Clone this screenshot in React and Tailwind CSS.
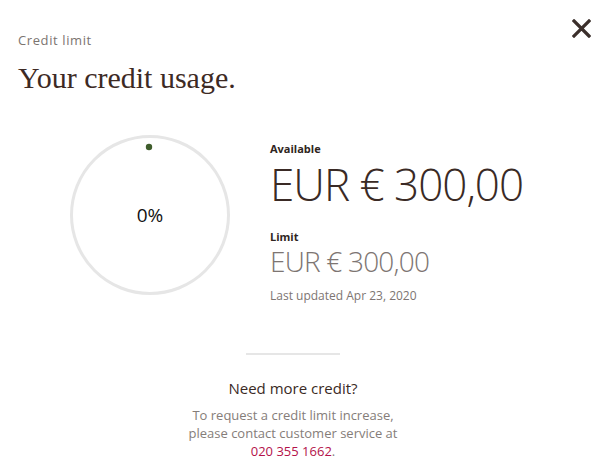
export default function App() {
  return (
    <div
      className="w-[603px] h-[466px] bg-white relative overflow-hidden"
      style={{ fontFamily: '"Open Sans", "Noto Sans", sans-serif' }}
    >
      {/* Close button */}
      <button className="absolute right-[12px] top-[18px] w-[20px] h-[20px] flex items-center justify-center text-[#3b2f2b]" aria-label="Close">
        <svg width="19" height="19" viewBox="0 0 19 19" fill="none">
          <path d="M2 2 L17 17 M17 2 L2 17" stroke="currentColor" strokeWidth="3.2" strokeLinecap="square" />
        </svg>
      </button>

      <div className="pt-[32px] px-[18px]">
        <div className="text-[13px] text-[#7b7470] tracking-[0.6px] leading-[16px]">Credit limit</div>
        <h1
          className="mt-[12px] text-[30px] leading-[36px] text-[#3d2a24]"
          style={{ fontFamily: '"Liberation Serif", "DejaVu Serif", serif' }}
        >
          Your credit usage.
        </h1>
      </div>

      <div className="flex flex-row items-start mt-[39px] pl-[70px]">
        {/* Usage ring */}
        <div className="relative w-[160px] h-[160px] shrink-0">
          <svg width="160" height="160" viewBox="0 0 160 160" className="absolute inset-0">
            <circle cx="80" cy="80" r="78.5" fill="none" stroke="#e6e6e6" strokeWidth="3" />
            <circle cx="79" cy="12" r="3.2" fill="#3f5d2c" />
          </svg>
          <div className="absolute inset-0 flex items-center justify-center text-[19px] text-[#111]">0%</div>
        </div>

        {/* Amounts */}
        <div className="ml-[40px] pt-[7px] flex flex-col">
          <div className="text-[11px] font-bold text-[#2f2521] leading-[14px]">Available</div>
          <div className="mt-[2px] text-[44px] font-light leading-[52px] text-[#3a2a25] tracking-[-1px]">EUR € 300,00</div>
          <div className="mt-[20px] text-[11px] font-bold text-[#2f2521] leading-[14px]">Limit</div>
          <div className="mt-[3px] text-[28px] font-light leading-[28px] text-[#7d7572] tracking-[-0.8px]">EUR € 300,00</div>
          <div className="mt-[13px] text-[12px] leading-[16px] text-[#7d7572]">Last updated Apr 23, 2020</div>
        </div>
      </div>

      {/* Footer */}
      <div className="flex flex-col items-center pr-[17px] mt-[49px]">
        <div className="w-[94px] h-[2px] bg-[#e6e6e6]" />
        <div className="mt-[23px] text-[15px] leading-[20px] text-[#3a2a25]">Need more credit?</div>
        <div className="mt-[8px] text-[13px] leading-[18px] text-[#857d79] text-center">
          To request a credit limit increase,
          <br />
          please contact customer service at
          <br />
          <span className="text-[#b4124a]">020 355 1662</span>.
        </div>
      </div>
    </div>
  );
}
